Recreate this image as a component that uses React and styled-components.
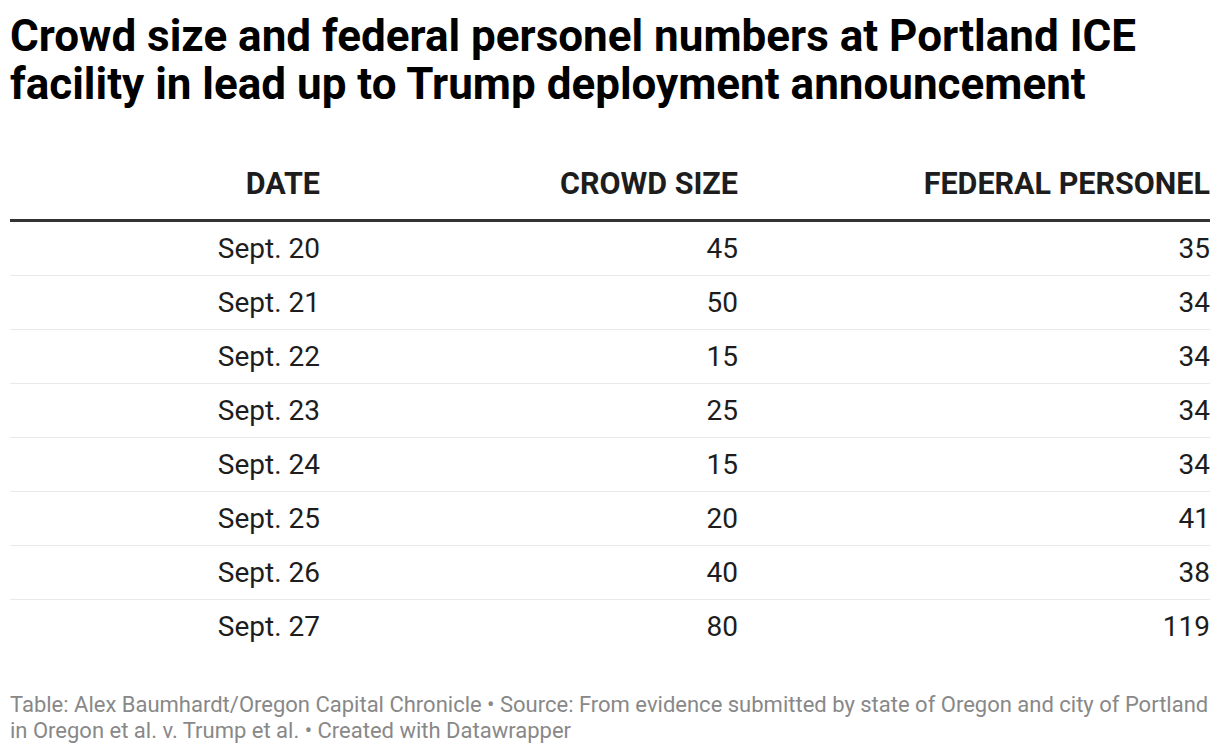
import React from "react";
import styled, { createGlobalStyle } from "styled-components";

const Global = createGlobalStyle`
  html, body { margin: 0; padding: 0; background: #ffffff; }
  body { font-family: Roboto, "Liberation Sans", Arial, sans-serif; }
`;

const Page = styled.div`
  padding: 12px 10px 0 10px;
  width: 1200px;
`;

const Title = styled.h1`
  margin: 0 0 42px 0;
  font-family: Roboto, "Liberation Sans", Arial, sans-serif;
  font-weight: 700;
  font-size: 44px;
  line-height: 48px;
  color: #000000;
`;

const Table = styled.div`
  display: grid;
  grid-template-columns: 310px 418px 472px;
`;

const HeadCell = styled.div`
  text-align: right;
  font-weight: 700;
  font-size: 30.5px;
  line-height: 36px;
  text-transform: uppercase;
  color: #1d1d1d;
  padding: 16px 0 17px 0;
  border-bottom: 3px solid #333333;
`;

const Cell = styled.div`
  text-align: right;
  font-weight: 400;
  font-size: 28px;
  line-height: 33px;
  color: #1d1d1d;
  height: 53px;
  display: flex;
  align-items: center;
  justify-content: flex-end;
  border-bottom: 1px solid ${(p) => (p.$last ? "transparent" : "#e9e9e9")};
`;

const Footer = styled.div`
  margin-top: 38px;
  font-size: 22px;
  line-height: 26px;
  color: #888888;
`;

const rows = [
  ["Sept. 20", "45", "35"],
  ["Sept. 21", "50", "34"],
  ["Sept. 22", "15", "34"],
  ["Sept. 23", "25", "34"],
  ["Sept. 24", "15", "34"],
  ["Sept. 25", "20", "41"],
  ["Sept. 26", "40", "38"],
  ["Sept. 27", "80", "119"],
];

export default function App() {
  return (
    <Page>
      <Global />
      <Title>
        Crowd size and federal personel numbers at Portland ICE facility in
        lead up to Trump deployment announcement
      </Title>
      <Table>
        <HeadCell>Date</HeadCell>
        <HeadCell>Crowd size</HeadCell>
        <HeadCell>Federal personel</HeadCell>
        {rows.map((r, i) =>
          r.map((v, j) => (
            <Cell key={`${i}-${j}`} $last={i === rows.length - 1}>
              {v}
            </Cell>
          ))
        )}
      </Table>
      <Footer>
        Table: Alex Baumhardt/Oregon Capital Chronicle • Source: From evidence
        submitted by state of Oregon and city of Portland in Oregon et al. v.
        Trump et al. • Created with Datawrapper
      </Footer>
    </Page>
  );
}
